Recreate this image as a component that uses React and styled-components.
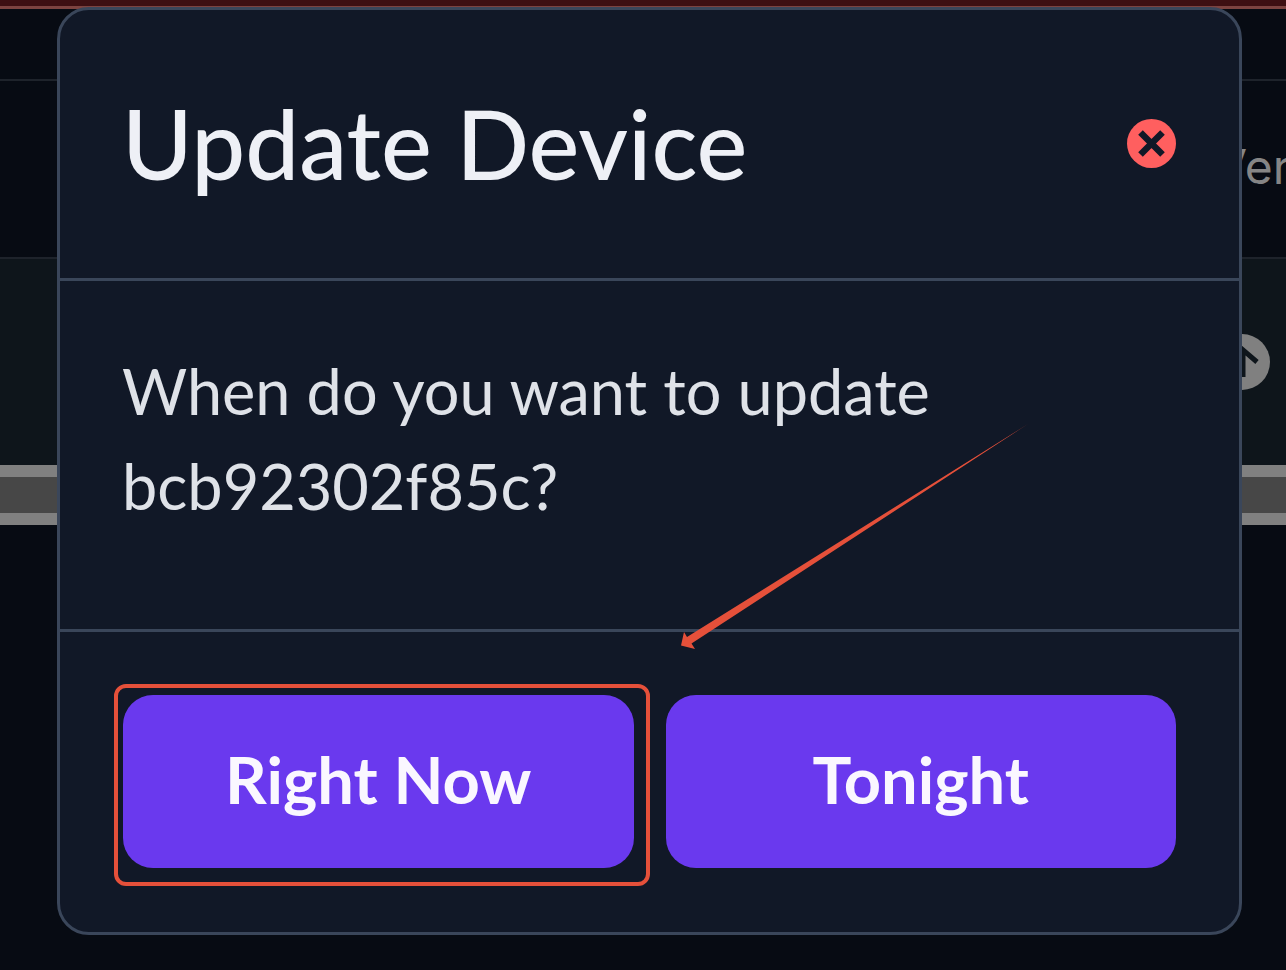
import styled, { createGlobalStyle } from "styled-components";

const GlobalStyle = createGlobalStyle`
  * {
    box-sizing: border-box;
  }

  body {
    margin: 0;
    background: #070b13;
    color: #eef0f6;
    font-family: Lato, "Open Sans", sans-serif;
  }
`;

const Page = styled.main`
  display: grid;
  min-height: 100vh;
  overflow: hidden;
`;

const Backdrop = styled.div`
  grid-area: 1 / 1;
`;

const AlertStrip = styled.div`
  height: 9px;
  background: #3d0f12;
  border-bottom: 3px solid #7c4340;
`;

const Toolbar = styled.div`
  height: 72px;
  border-bottom: 2px solid #1e232b;
`;

const DeviceTable = styled.table`
  width: 100%;
  table-layout: fixed;
  border-collapse: collapse;
`;

const HeadCell = styled.th`
  width: ${({ $width }) => $width || "auto"};
  height: 177px;
  padding: 0 0 6px;
  border-bottom: 2px solid #1e232b;
  color: #858585;
  font-family: Inter, sans-serif;
  font-size: 48px;
  font-weight: 400;
  text-align: left;
  overflow: hidden;
`;

const Cell = styled.td`
  height: 207px;
  padding: 0;
  background: #0e151b;
  vertical-align: middle;

  svg {
    display: block;
  }
`;

const ScrollTrack = styled.div`
  height: 60px;
  background: #474747;
  border: solid #808080;
  border-width: 12px 0;
`;

const Overlay = styled.div`
  grid-area: 1 / 1;
  z-index: 1;
  padding: 7px 44px 34px 57px;
`;

const Modal = styled.section`
  border: 3px solid #3a465a;
  border-radius: 32px;
  background: #111827;
`;

const ModalHeader = styled.header`
  display: flex;
  align-items: center;
  justify-content: space-between;
  height: 271px;
  padding: 0 63px 2px 62px;
  border-bottom: 3px solid #3a465a;
`;

const Title = styled.h1`
  margin: 0;
  font-size: 96px;
  font-weight: 500;
  line-height: 128px;
`;

const CloseButton = styled.button`
  padding: 0;
  border: 0;
  background: none;
  cursor: pointer;

  svg {
    display: block;
  }
`;

const ModalBody = styled.div`
  height: 351px;
  padding: 62px;
  border-bottom: 3px solid #3a465a;
`;

const Message = styled.p`
  max-width: 900px;
  margin: 0;
  color: #dfe2e8;
  font-size: 63px;
  line-height: 95px;
`;

const ModalFooter = styled.footer`
  display: flex;
  gap: 32px;
  padding: 63px 63px 64px;
`;

const Action = styled.div`
  position: relative;
  flex: 1;
`;

const ActionButton = styled.button`
  display: block;
  width: 100%;
  height: 173px;
  padding: 0 0 6px;
  border: 0;
  border-radius: 30px;
  background: #6a39ee;
  color: #faf7ff;
  font-family: inherit;
  font-size: 65px;
  font-weight: 700;
  cursor: pointer;
`;

const Highlight = styled.span`
  position: absolute;
  inset: -11px -16px -18px -9px;
  border: 4px solid #e5503a;
  border-radius: 12px;
  pointer-events: none;
`;

const Pointer = styled.svg`
  position: absolute;
  left: calc(100% + 47px);
  bottom: calc(100% + 46px);
  pointer-events: none;
`;

const CloseIcon = () => (
  <svg width="49" height="49" viewBox="0 0 49 49" aria-hidden="true">
    <circle cx="24.5" cy="24.5" r="24.5" fill="#ff5f5f" />
    <path d="M13.5 13.5l22 22M35.5 13.5l-22 22" stroke="#111827" strokeWidth="6.5" />
  </svg>
);

const UpdateIcon = () => (
  <svg width="56" height="56" viewBox="0 0 56 56" aria-hidden="true">
    <circle cx="28" cy="28" r="28" fill="#808080" />
    <path d="M29 43V16M14 28l14-13 15 13" fill="none" stroke="#0e151b" strokeWidth="5" />
  </svg>
);

const App = () => {
  return (
    <>
      <GlobalStyle />
      <Page>
        <Backdrop>
          <AlertStrip />
          <Toolbar />
          <DeviceTable>
            <thead>
              <tr>
                <HeadCell />
                <HeadCell $width="72px">Ver</HeadCell>
              </tr>
            </thead>
            <tbody>
              <tr>
                <Cell />
                <Cell>
                  <UpdateIcon />
                </Cell>
              </tr>
            </tbody>
          </DeviceTable>
          <ScrollTrack />
        </Backdrop>
        <Overlay>
          <Modal role="dialog" aria-labelledby="update-title">
            <ModalHeader>
              <Title id="update-title">Update Device</Title>
              <CloseButton aria-label="Close">
                <CloseIcon />
              </CloseButton>
            </ModalHeader>
            <ModalBody>
              <Message>When do you want to update bcb92302f85c?</Message>
            </ModalBody>
            <ModalFooter>
              <Action>
                <ActionButton>Right Now</ActionButton>
                <Highlight />
                <Pointer width="348" height="225" viewBox="0 0 348 225" aria-hidden="true">
                  <path
                    d="M347 0L6 213L3 208L0 221.5L14 225L10.5 219.5Z"
                    fill="#e5503a"
                  />
                </Pointer>
              </Action>
              <Action>
                <ActionButton>Tonight</ActionButton>
              </Action>
            </ModalFooter>
          </Modal>
        </Overlay>
      </Page>
    </>
  );
};

export default App;
